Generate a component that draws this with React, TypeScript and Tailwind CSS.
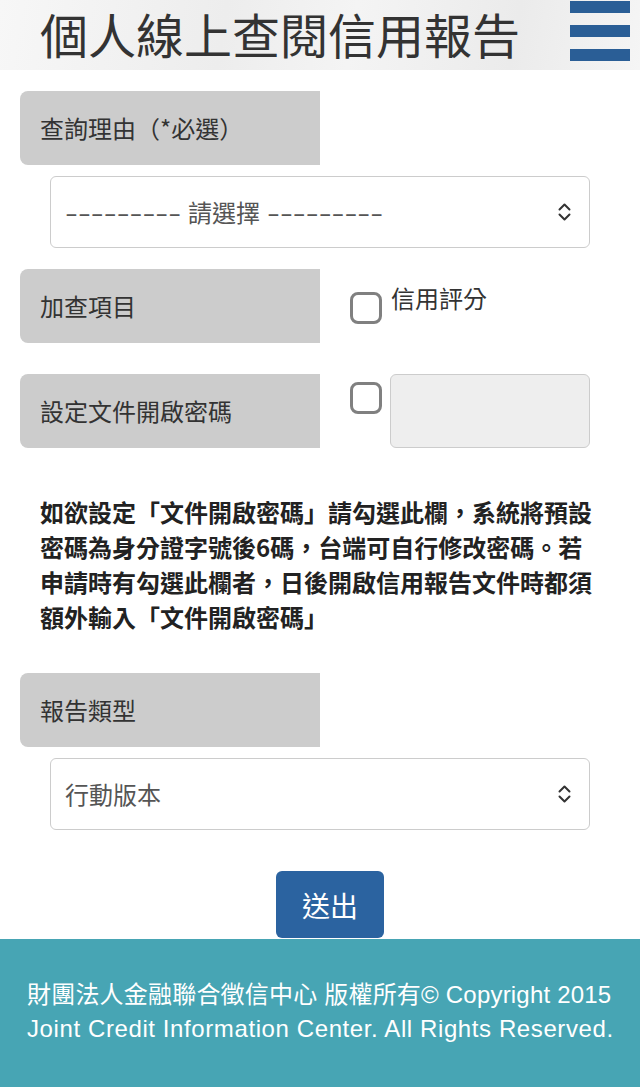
import React from "react";

function Chevrons() {
  return (
    <svg width="13" height="18" viewBox="0 0 13 18" fill="none" stroke="#333" strokeWidth="2" strokeLinecap="round" strokeLinejoin="round">
      <path d="M1.5 6.5 L6.5 1.5 L11.5 6.5" />
      <path d="M1.5 11.5 L6.5 16.5 L11.5 11.5" />
    </svg>
  );
}

function Label({ children }: { children: React.ReactNode }) {
  return (
    <div className="w-[300px] h-[74px] shrink-0 rounded-l-[8px] bg-[#cccccc] flex items-center pl-[20px] text-[24px] leading-[30px] text-[#333]">
      {children}
    </div>
  );
}

function Select({ children }: { children: React.ReactNode }) {
  return (
    <div className="ml-[30px] mt-[11px] w-[540px] h-[72px] border-[1.5px] border-[#cccccc] rounded-[6px] bg-white flex items-center justify-between pl-[14px] pr-[18px] text-[24px] text-[#555]">
      <span className="whitespace-pre flex items-center">{children}</span>
      <Chevrons />
    </div>
  );
}

function Checkbox() {
  return <div className="w-[32px] h-[32px] border-[3px] border-[#808080] rounded-[8px] bg-white shrink-0" />;
}

function Dashes() {
  return (
    <span className="inline-block origin-left scale-x-[1.55] mr-[41px]">---------</span>
  );
}

export default function App() {
  return (
    <div className="w-[640px] min-h-[1087px] bg-white font-['Noto_Sans_CJK_TC','Noto_Sans',sans-serif]">
      <header className="h-[70px] flex items-start justify-between bg-[linear-gradient(100deg,#f7f7f7_0%,#ededed_35%,#f4f4f4_55%,#ebebeb_80%,#f5f5f5_100%)]">
        <h1 className="pl-[40px] text-[48px] leading-[66px] text-[#333] font-normal whitespace-nowrap">個人線上查閱信用報告</h1>
        <div className="mt-[1px] mr-[10px] flex flex-col gap-[12px]">
          <div className="w-[60px] h-[12px] bg-[#2a5e96]" />
          <div className="w-[60px] h-[12px] bg-[#2a5e96]" />
          <div className="w-[60px] h-[12px] bg-[#2a5e96]" />
        </div>
      </header>

      <main className="ml-[20px]">
        <div className="mt-[21px]">
          <Label>查詢理由（*必選）</Label>
        </div>
        <Select>
          <Dashes />
          <span className="mx-[7px]">請選擇</span>
          <Dashes />
        </Select>

        <div className="mt-[21px] flex">
          <Label>加查項目</Label>
          <div className="ml-[30px] mt-[23px]">
            <Checkbox />
          </div>
          <div className="ml-[9px] mt-[14px] text-[24px] leading-[30px] text-[#333]">信用評分</div>
        </div>

        <div className="mt-[31px] flex">
          <Label>設定文件開啟密碼</Label>
          <div className="ml-[30px] mt-[8px]">
            <Checkbox />
          </div>
          <div className="ml-[8px] w-[200px] h-[74px] bg-[#eeeeee] border-[1.5px] border-[#cccccc] rounded-[6px]" />
        </div>

        <p className="mt-[46px] pl-[20px] w-[580px] text-[24px] leading-[35px] font-bold text-[#222]">
          如欲設定「文件開啟密碼」請勾選此欄，系統將預設密碼為身分證字號後6碼，台端可自行修改密碼。若申請時有勾選此欄者，日後開啟信用報告文件時都須額外輸入「文件開啟密碼」
        </p>

        <div className="mt-[39px]">
          <Label>報告類型</Label>
        </div>
        <Select>行動版本</Select>

        <div className="mt-[41px] flex justify-center">
          <button className="w-[108px] h-[67px] rounded-[6px] bg-[#2b63a0] text-white text-[28px] leading-[34px]">送出</button>
        </div>
      </main>

      <footer className="mt-[1px] h-[148px] bg-[#47a5b4] pt-[39px] px-[27px] text-white text-[24px] leading-[34px] whitespace-nowrap font-['Liberation_Sans','Noto_Sans_CJK_TC',sans-serif]">
        <div className="tracking-[0.2px]">財團法人金融聯合徵信中心 版權所有© Copyright 2015</div>
        <div className="tracking-[0.6px]">Joint Credit Information Center. All Rights Reserved.</div>
      </footer>
    </div>
  );
}
